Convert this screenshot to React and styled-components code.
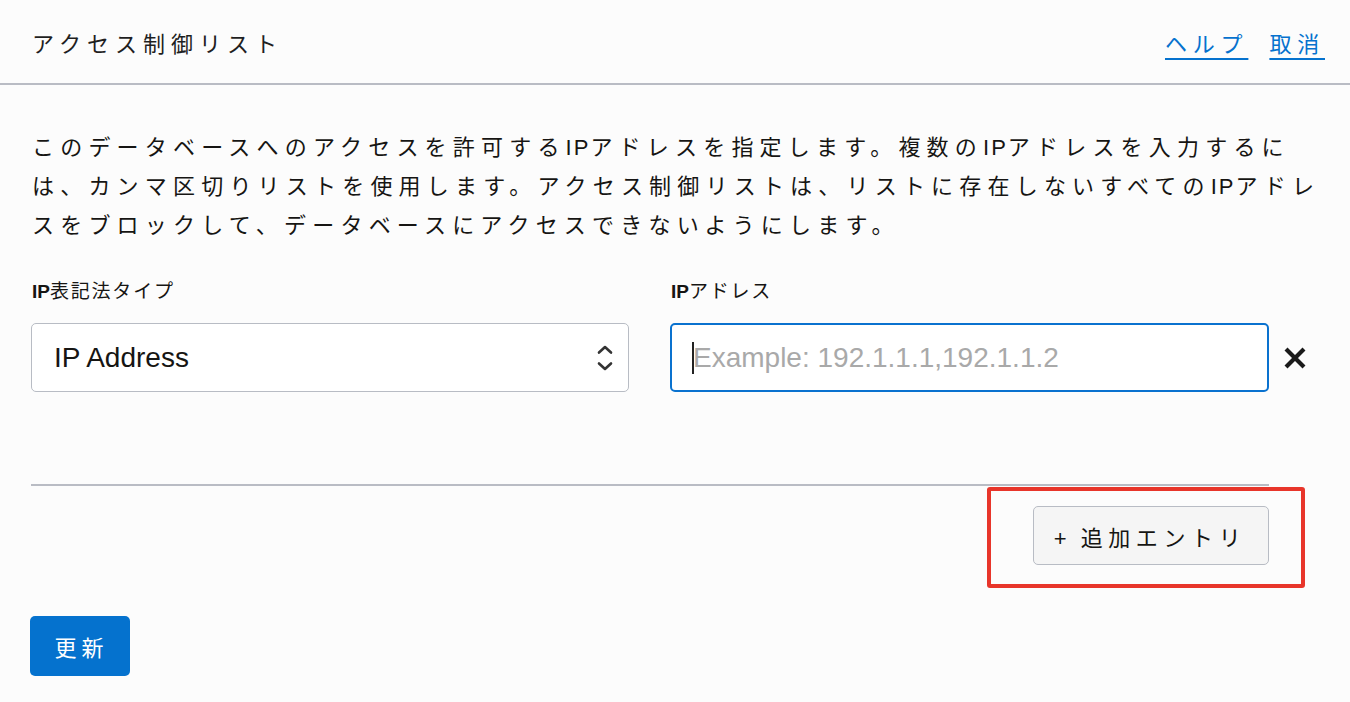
import React from "react";
import styled, { createGlobalStyle } from "styled-components";

const Global = createGlobalStyle`
  html, body { margin: 0; padding: 0; background: #fcfcfc; }
  body {
    font-family: "Liberation Sans", "Noto Sans CJK JP", sans-serif;
    color: #161513;
  }
  * { box-sizing: border-box; }
`;

const Page = styled.div`
  position: relative;
  width: 1350px;
  min-height: 702px;
  background: #fcfcfc;
`;

const Header = styled.header`
  height: 85px;
  display: flex;
  align-items: center;
  justify-content: space-between;
  padding: 0 25px 0 32px;
  border-bottom: 2px solid #b9bcc4;
`;

const Title = styled.h1`
  margin: 0;
  font-size: 22px;
  font-weight: 400;
  letter-spacing: 6px;
  color: #1f1f1f;
`;

const Links = styled.nav`
  display: flex;
  gap: 21px;
`;

const Link = styled.a`
  font-size: 22px;
  letter-spacing: 5.8px;
  color: #0572ce;
  text-decoration: underline;
  text-underline-offset: 6px;
  text-decoration-thickness: 1.5px;
  cursor: pointer;
`;

const Body = styled.main`
  padding: 43px 0 0 31px;
`;

const Description = styled.p`
  margin: 0;
  font-size: 22px;
  line-height: 39px;
  letter-spacing: 6.2px;
  white-space: nowrap;
  padding-left: 1px;
`;

const Latin = styled.span`
  letter-spacing: ${(p) => p.$spacing || "2px"};
  font-weight: ${(p) => (p.$bold ? 700 : 400)};
`;

const FieldRow = styled.div`
  display: grid;
  grid-template-columns: 598px 599px auto;
  column-gap: 41px;
  margin-top: 35px;
  align-items: end;
`;

const Field = styled.div`
  display: flex;
  flex-direction: column;
  gap: 19px;
`;

const Label = styled.label`
  font-size: 19px;
  line-height: 24px;
  letter-spacing: 1.8px;
  padding-left: 1px;
`;

const SelectBox = styled.div`
  height: 69px;
  border: 1.5px solid #b8bcc4;
  border-radius: 5px;
  background: #ffffff;
  display: flex;
  align-items: center;
  justify-content: space-between;
  padding: 0 14px 0 22px;
  font-size: 28px;
  color: #161513;
`;

const InputWrap = styled.div`
  position: relative;
  height: 69px;
`;

const Input = styled.input`
  width: 100%;
  height: 100%;
  border: 2px solid #0a72cf;
  border-radius: 5px;
  background: #ffffff;
  padding: 0 20px 0 21px;
  font-family: "Liberation Sans", "Noto Sans CJK JP", sans-serif;
  font-size: 28px;
  color: #161513;
  outline: none;
  &::placeholder { color: #a9a9a9; }
`;

const Caret = styled.span`
  position: absolute;
  left: 22px;
  top: 19px;
  width: 2px;
  height: 32px;
  background: #222;
`;

const RemoveButton = styled.button`
  height: 69px;
  display: flex;
  align-items: center;
  background: none;
  border: none;
  padding: 0;
  margin-left: -26px;
  cursor: pointer;
`;

const Divider = styled.hr`
  width: 1238px;
  margin: 92px 0 0 0;
  border: none;
  border-top: 2px solid #b9bcc4;
`;

const AddRow = styled.div`
  width: 1238px;
  display: flex;
  justify-content: flex-end;
  margin-top: 20px;
`;

const AddButton = styled.button`
  width: 236px;
  height: 59px;
  background: #f5f5f5;
  border: 1.5px solid #b8bcc4;
  border-radius: 5px;
  font-family: "Liberation Sans", "Noto Sans CJK JP", sans-serif;
  font-size: 22px;
  letter-spacing: 5.6px;
  color: #161513;
  padding: 0 2px 0 0;
  cursor: pointer;
`;

const Plus = styled.span`
  letter-spacing: 4px;
`;

const Highlight = styled.div`
  position: absolute;
  left: 987px;
  top: 487px;
  width: 318px;
  height: 101px;
  border: 4px solid #e8352a;
  border-radius: 3px;
  pointer-events: none;
`;

const PrimaryButton = styled.button`
  margin-top: 51px;
  width: 100px;
  height: 60px;
  margin-left: -1px;
  background: #0572ce;
  border: none;
  border-radius: 5px;
  color: #ffffff;
  font-family: "Liberation Sans", "Noto Sans CJK JP", sans-serif;
  font-size: 22px;
  letter-spacing: 5px;
  padding: 0 0 0 3px;
  cursor: pointer;
`;

const Chevrons = () => (
  <svg width="18" height="30" viewBox="0 0 18 30" fill="none">
    <path d="M3 9.5 L9 4 L15 9.5" stroke="#333" strokeWidth="2.6" strokeLinecap="round" strokeLinejoin="round" />
    <path d="M3 20.5 L9 26 L15 20.5" stroke="#333" strokeWidth="2.6" strokeLinecap="round" strokeLinejoin="round" />
  </svg>
);

const CloseIcon = () => (
  <svg width="22" height="22" viewBox="0 0 22 22" fill="none">
    <path d="M3.5 3.5 L18.5 18.5 M18.5 3.5 L3.5 18.5" stroke="#1a1a1a" strokeWidth="4.2" strokeLinecap="square" />
  </svg>
);

const IP = ({ bold }) => <Latin $bold={bold} $spacing={bold ? "0px" : "2px"}>IP</Latin>;

export default function App() {
  return (
    <Page>
      <Global />
      <Header>
        <Title>アクセス制御リスト</Title>
        <Links>
          <Link>ヘルプ</Link>
          <Link>取消</Link>
        </Links>
      </Header>
      <Body>
        <Description>
          このデータベースへのアクセスを許可する<IP />アドレスを指定します。複数の<IP />アドレスを入力するに
          <br />
          は、カンマ区切りリストを使用します。アクセス制御リストは、リストに存在しないすべての<IP />アドレ
          <br />
          スをブロックして、データベースにアクセスできないようにします。
        </Description>
        <FieldRow>
          <Field>
            <Label><IP bold />表記法タイプ</Label>
            <SelectBox>
              <span>IP Address</span>
              <Chevrons />
            </SelectBox>
          </Field>
          <Field>
            <Label><IP bold />アドレス</Label>
            <InputWrap>
              <Input placeholder="Example: 192.1.1.1,192.1.1.2" />
              <Caret />
            </InputWrap>
          </Field>
          <RemoveButton aria-label="削除">
            <CloseIcon />
          </RemoveButton>
        </FieldRow>
        <Divider />
        <AddRow>
          <AddButton><Plus>+ </Plus>追加エントリ</AddButton>
        </AddRow>
        <PrimaryButton>更新</PrimaryButton>
      </Body>
      <Highlight />
    </Page>
  );
}
